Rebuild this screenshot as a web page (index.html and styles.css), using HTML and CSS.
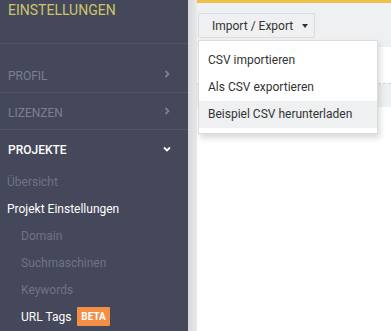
FILE: index.html
```html
<!DOCTYPE html>
<html lang="de">
<head>
    <meta charset="UTF-8">
    <meta name="viewport" content="width=device-width, initial-scale=1.0">
    <title>Einstellungen</title>
    <link rel="stylesheet" href="styles.css">
</head>
<body>
    <aside class="sidebar">
        <div class="sidebar-title">EINSTELLUNGEN</div>
        <nav class="nav">
            <div class="nav-item">
                <span>PROFIL</span>
                <svg class="chev" width="6" height="8" viewBox="0 0 6 8"><polyline points="1.5,1 4.5,4 1.5,7" fill="none" stroke="currentColor" stroke-width="1.8"/></svg>
            </div>
            <div class="nav-item">
                <span>LIZENZEN</span>
                <svg class="chev" width="6" height="8" viewBox="0 0 6 8"><polyline points="1.5,1 4.5,4 1.5,7" fill="none" stroke="currentColor" stroke-width="1.8"/></svg>
            </div>
            <div class="nav-item open">
                <span>PROJEKTE</span>
                <svg class="chev" width="8" height="6" viewBox="0 0 8 6"><polyline points="1,1.5 4,4.5 7,1.5" fill="none" stroke="currentColor" stroke-width="1.8"/></svg>
            </div>
            <div class="sub-item">Übersicht</div>
            <div class="sub-item active">Projekt Einstellungen</div>
            <div class="sub-item deep">Domain</div>
            <div class="sub-item deep">Suchmaschinen</div>
            <div class="sub-item deep">Keywords</div>
            <div class="sub-item deep active">URL Tags <span class="badge">BETA</span></div>
        </nav>
    </aside>
    <div class="shade"></div>
    <main class="main">
        <div class="topline"></div>
        <div class="toolbar">
            <div class="btn-wrap">
                <button class="btn">Import / Export <span class="caret"></span></button>
                <ul class="dropdown">
                    <li>CSV importieren</li>
                    <li>Als CSV exportieren</li>
                    <li class="hover">Beispiel CSV herunterladen</li>
                </ul>
            </div>
        </div>
        <div class="panel"></div>
        <div class="table-head"></div>
        <div class="table-body"></div>
    </main>
</body>
</html>
```

FILE: styles.css
```css
html, body {
    margin: 0;
    padding: 0;
    width: 100%;
    height: 100%;
    overflow: hidden;
}
body {
    display: flex;
    font-family: Roboto, "Liberation Sans", sans-serif;
    background: white;
}
.sidebar {
    width: 188px;
    flex-shrink: 0;
    background: #45475a;
    display: flex;
    flex-direction: column;
}
.sidebar-title {
    height: 44px;
    box-sizing: border-box;
    padding: 0 8px;
    line-height: 20px;
    font-size: 14px;
    color: #cbc66c;
    border-bottom: 1px solid #515469;
}
.nav {
    padding-top: 12px;
}
.nav-item {
    height: 37px;
    box-sizing: border-box;
    display: flex;
    align-items: center;
    justify-content: space-between;
    padding: 3px 18px 0 8px;
    font-size: 12px;
    color: #7b7f96;
    border-bottom: 1px solid #515469;
}
.nav-item .chev {
    margin-top: -3px;
}
.nav-item.open {
    color: white;
    font-weight: 500;
    border-bottom: none;
    padding-right: 17px;
}
.sub-item {
    height: 27px;
    box-sizing: border-box;
    display: flex;
    align-items: center;
    padding: 2px 0 0 7px;
    font-size: 12px;
    color: #6f7388;
}
.sub-item.deep {
    padding-left: 21px;
}
.sub-item.active {
    color: white;
}
.badge {
    margin-left: 6px;
    background: #f28f45;
    color: white;
    font-size: 10px;
    font-weight: 700;
    padding: 0 4px;
    line-height: 19px;
    border-radius: 1px;
}
.shade {
    width: 9px;
    flex-shrink: 0;
    background: linear-gradient(to right, #d8d8da, #e9e9ea);
}
.main {
    flex: 1;
    display: flex;
    flex-direction: column;
}
.topline {
    height: 3px;
    background: #efc049;
}
.toolbar {
    height: 44px;
    box-sizing: border-box;
    background: #eff0f2;
    padding: 10px 0 0 1px;
}
.btn-wrap {
    position: relative;
    display: inline-block;
}
.btn {
    height: 25px;
    width: 117px;
    box-sizing: border-box;
    padding: 0 0 0 13px;
    text-align: left;
    white-space: nowrap;
    background: #eef0f2;
    border: 1px solid #dcdde0;
    border-radius: 2px;
    font-family: inherit;
    font-size: 12px;
    color: #333;
}
.caret {
    display: inline-block;
    margin-left: 6px;
    vertical-align: middle;
    border-top: 4px solid #333;
    border-left: 3px solid transparent;
    border-right: 3px solid transparent;
}
.dropdown {
    position: absolute;
    top: 27px;
    left: 0;
    width: 178px;
    margin: 0;
    padding: 6px 0 5px;
    list-style: none;
    background: white;
    border: 1px solid #dcdcdc;
    box-shadow: 2px 4px 6px rgba(0, 0, 0, 0.15);
    font-size: 12px;
    color: #333;
}
.dropdown li {
    height: 27px;
    line-height: 27px;
    padding-left: 9px;
}
.dropdown li.hover {
    background: #eef0f2;
}
.panel {
    height: 36px;
    border-bottom: 1px dashed #d6d6d6;
}
.table-head {
    height: 23px;
    background: #eef0f2;
}
.table-body {
    flex: 1;
}
```
